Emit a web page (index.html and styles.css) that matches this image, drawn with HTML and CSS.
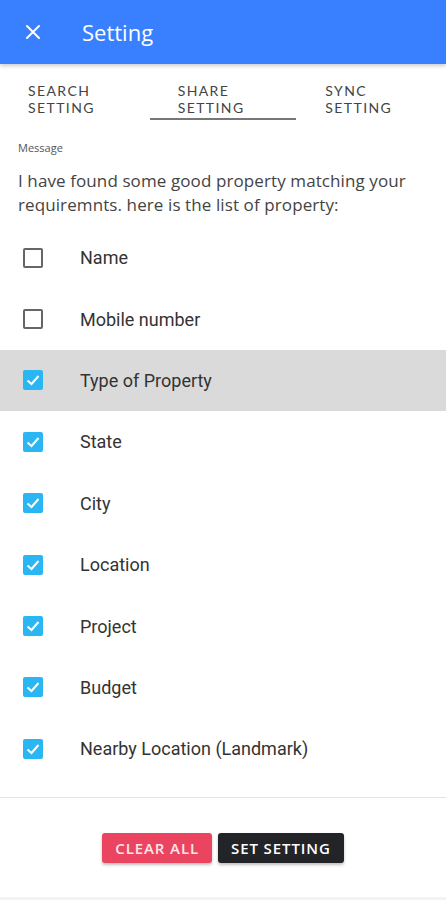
FILE: index.html
```html
<!DOCTYPE html>
<html lang="en">
<head>
    <meta charset="UTF-8">
    <meta name="viewport" content="width=device-width, initial-scale=1.0">
    <title>Setting</title>
    <link rel="stylesheet" href="styles.css">
</head>
<body>
    <header class="toolbar">
        <button class="close-btn" type="button" aria-label="close">
            <svg width="16" height="16" viewBox="0 0 16 16"><path d="M2 2L14 14M14 2L2 14" stroke="#fff" stroke-width="2" stroke-linecap="round"/></svg>
        </button>
        <h1>Setting</h1>
    </header>

    <nav class="tabs">
        <div class="tab"><span>SEARCH</span><span>SETTING</span></div>
        <div class="tab active"><span>SHARE</span><span>SETTING</span></div>
        <div class="tab"><span>SYNC</span><span>SETTING</span></div>
    </nav>

    <div class="message">
        <div class="message-label">Message</div>
        <p>I have found some good property matching your requiremnts. here is the list of property:</p>
    </div>

    <ul class="fields">
        <li><span class="box"></span>Name</li>
        <li><span class="box"></span>Mobile number</li>
        <li class="selected"><span class="box checked"></span>Type of Property</li>
        <li><span class="box checked"></span>State</li>
        <li><span class="box checked"></span>City</li>
        <li><span class="box checked"></span>Location</li>
        <li><span class="box checked"></span>Project</li>
        <li><span class="box checked"></span>Budget</li>
        <li><span class="box checked"></span>Nearby Location (Landmark)</li>
    </ul>

    <footer class="actions">
        <button type="button" class="btn btn-clear">CLEAR ALL</button>
        <button type="button" class="btn btn-set">SET SETTING</button>
    </footer>
</body>
</html>
```

FILE: styles.css
```css
body {
    margin: 0;
    font-family: "Open Sans", Lato, sans-serif;
    background-color: #fff;
    color: #444;
}
.toolbar {
    height: 64px;
    background-color: #3880ff;
    display: flex;
    align-items: center;
    box-shadow: 0 2px 4px rgba(0, 0, 0, 0.2);
    position: relative;
}
.close-btn {
    background: none;
    border: none;
    padding: 0;
    margin-left: 25px;
    width: 16px;
    height: 16px;
    display: flex;
}
.toolbar h1 {
    margin: 0 0 0 41px;
    color: #fff;
    font-size: 22px;
    font-weight: 500;
}
.tabs {
    display: grid;
    grid-template-columns: repeat(3, 1fr);
    height: 56px;
}
.tab {
    padding: 19px 0 0 28px;
    display: flex;
    flex-direction: column;
    font-family: Lato, sans-serif;
    font-size: 14px;
    letter-spacing: 1.4px;
    color: #444;
    box-sizing: border-box;
}
.tab span {
    line-height: 16.8px;
}
.tab.active {
    border-bottom: 2px solid #777;
    margin: 0 1px;
}
.message {
    padding: 0 18px;
}
.message-label {
    font-size: 11px;
    color: #555;
    margin-top: 20px;
}
.message p {
    margin: 14px 0 0;
    font-size: 17px;
    letter-spacing: 0.1px;
    line-height: 24px;
    color: #444;
}
.fields {
    list-style: none;
    margin: 10px 0 0;
    padding: 0;
}
.fields li {
    height: 61.4px;
    display: flex;
    align-items: center;
    padding-left: 23px;
    font-family: Roboto, sans-serif;
    font-size: 18px;
    color: #333;
}
.fields li.selected {
    background-color: #dadada;
}
.box {
    width: 16px;
    height: 16px;
    border: 2px solid #666;
    border-radius: 2px;
    margin-right: 37px;
    flex-shrink: 0;
}
.box.checked {
    border-color: #2ab5f3;
    background: #2ab5f3 url("data:image/svg+xml,%3Csvg xmlns='http://www.w3.org/2000/svg' viewBox='0 0 20 20'%3E%3Cpath d='M4.5 10.5L8.5 14L15.5 6' fill='none' stroke='white' stroke-width='2'/%3E%3C/svg%3E") center / 20px 20px no-repeat;
}
.actions {
    border-top: 1px solid #e4e4e4;
    margin-top: 17px;
    padding: 35px 0 34px;
    display: flex;
    justify-content: center;
    gap: 6px;
    border-bottom: 3px solid #f3f3f3;
}
.btn {
    height: 30px;
    border: none;
    border-radius: 3px;
    font-family: "Open Sans", sans-serif;
    font-size: 15px;
    font-weight: 600;
    letter-spacing: 0.9px;
    padding: 0 13px;
    box-shadow: 0 2px 3px rgba(0, 0, 0, 0.25);
}
.btn-clear {
    background-color: #ea4460;
    color: #fde6ea;
}
.btn-set {
    background-color: #222428;
    color: #fff;
}
```
